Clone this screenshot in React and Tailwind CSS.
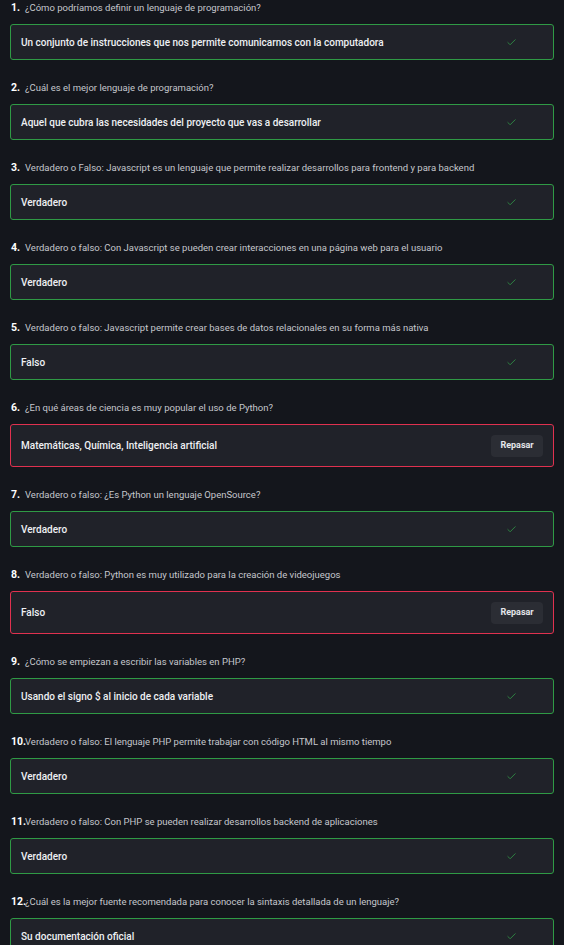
import { Check } from 'lucide-react'

const items = [
  { q: '¿Cómo podríamos definir un lenguaje de programación?', a: 'Un conjunto de instrucciones que nos permite comunicarnos con la computadora', ok: true },
  { q: '¿Cuál es el mejor lenguaje de programación?', a: 'Aquel que cubra las necesidades del proyecto que vas a desarrollar', ok: true },
  { q: 'Verdadero o Falso: Javascript es un lenguaje que permite realizar desarrollos para frontend y para backend', a: 'Verdadero', ok: true },
  { q: 'Verdadero o falso: Con Javascript se pueden crear interacciones en una página web para el usuario', a: 'Verdadero', ok: true },
  { q: 'Verdadero o falso: Javascript permite crear bases de datos relacionales en su forma más nativa', a: 'Falso', ok: true },
  { q: '¿En qué áreas de ciencia es muy popular el uso de Python?', a: 'Matemáticas, Química, Inteligencia artificial', ok: false },
  { q: 'Verdadero o falso: ¿Es Python un lenguaje OpenSource?', a: 'Verdadero', ok: true },
  { q: 'Verdadero o falso: Python es muy utilizado para la creación de videojuegos', a: 'Falso', ok: false },
  { q: '¿Cómo se empiezan a escribir las variables en PHP?', a: 'Usando el signo $ al inicio de cada variable', ok: true },
  { q: 'Verdadero o falso: El lenguaje PHP permite trabajar con código HTML al mismo tiempo', a: 'Verdadero', ok: true },
  { q: 'Verdadero o falso: Con PHP se pueden realizar desarrollos backend de aplicaciones', a: 'Verdadero', ok: true },
  { q: '¿Cuál es la mejor fuente recomendada para conocer la sintaxis detallada de un lenguaje?', a: 'Su documentación oficial', ok: true },
]

function Item({ n, q, a, ok }) {
  return (
    <div className="mb-5">
      <div className="flex items-center h-4 pl-[11px] text-[9.5px] leading-4">
        <span className="w-[14px] shrink-0 font-bold text-white text-[10.5px]">{n}.</span>
        <span className="text-[#c5c7cc] whitespace-nowrap">{q}</span>
      </div>
      {ok ? (
        <div className="mt-2 mx-[10px] h-9 flex items-center justify-between pl-[10px] pr-[36px] rounded-[3px] border border-[#2f9a45] bg-[#202229]">
          <span className="text-[10px] font-medium text-[#eef0f3]">{a}</span>
          <Check size={11} strokeWidth={2} className="text-[#2f8a44]" />
        </div>
      ) : (
        <div className="mt-2 mx-[10px] h-[43px] flex items-center justify-between pl-[10px] pr-[10px] rounded-[3px] border border-[#e0314f] bg-[#202229]">
          <span className="text-[10px] font-medium text-[#eef0f3]">{a}</span>
          <button className="h-[22px] w-[52px] rounded-[4px] bg-[#2b2d34] text-[9px] font-bold text-[#e4e6ea]">Repasar</button>
        </div>
      )}
    </div>
  )
}

export default function App() {
  return (
    <div className="min-h-screen bg-[#14161c]" style={{ fontFamily: 'Roboto, "Noto Sans", sans-serif' }}>
      {items.map((it, i) => (
        <Item key={i} n={i + 1} {...it} />
      ))}
    </div>
  )
}
